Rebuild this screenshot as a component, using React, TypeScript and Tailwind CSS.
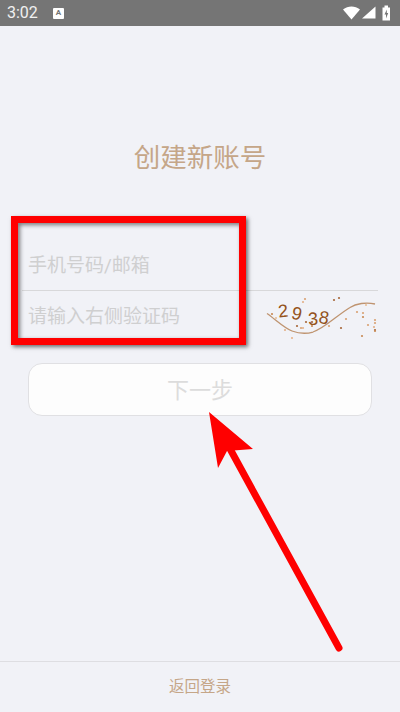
const cjk = "font-['Roboto','Noto_Sans_CJK_SC',sans-serif]"

const captchaDots: [number, number, string][] = [
  [272, 314, "#c98a55"], [276, 318, "#e8c09a"], [282, 316, "#e8c09a"], [285, 316, "#d9a274"], [285, 330, "#e3b088"],
  [292, 338, "#e8b48c"], [297, 326, "#a8673a"], [301, 328, "#d9a274"], [303, 328, "#e3b088"], [303, 302, "#e3b088"],
  [305, 299, "#d9a274"], [306, 322, "#a8673a"], [312, 322, "#a8673a"], [312, 326, "#c98a55"], [329, 326, "#d9a274"],
  [334, 300, "#a8673a"], [339, 298, "#a8673a"], [346, 319, "#d9a274"], [341, 328, "#a8673a"], [357, 312, "#d9a274"],
  [363, 313, "#d9a274"], [363, 317, "#c98a55"], [366, 305, "#e8c09a"], [362, 336, "#c98a55"], [368, 325, "#d9a274"],
  [375, 320, "#d9a274"], [375, 323, "#d9a274"], [374, 327, "#e3b088"], [375, 330, "#a8673a"], [375, 331, "#c98a55"],
]

function StatusBar() {
  return (
    <div className="flex h-[26px] shrink-0 items-center justify-between bg-[#757575] pl-[7px] pr-[7px]">
      <div className="flex items-center">
        <span className="font-['Roboto',sans-serif] text-[16px] leading-none text-white/90">3:02</span>
        <span className="ml-[15px] flex h-[11px] w-[11px] items-center justify-center rounded-[1px] bg-white font-['Roboto',sans-serif] text-[8px] font-bold leading-none text-[#757575]">
          A
        </span>
      </div>
      <svg width="50" height="16" viewBox="0 0 50 16" fill="white">
        <path d="M0 4.500C2.500 2.500 5.500 1.500 8.500 1.500S14.500 2.500 17 4.500L8.500 14.500Z" />
        <path d="M19 13.500L32.500 1.500V13.500Z" />
        <path d="M41.500 2.500V0.500H45V2.500H47V15.500H39.500V2.500Z" />
        <path d="M43.800 4.500L41.500 9.500H43V13.500L45.200 8H43.800Z" fill="#757575" />
      </svg>
    </div>
  )
}

function Captcha() {
  return (
    <svg width="120" height="50" viewBox="262 291 120 50" className="absolute right-[-4px] top-0">
      <path
        d="M267 313.500C275 319 284 328 292 331C299 333.500 306 334 313 332C325 328 336 316 350 307.500C356 303.500 366 302 375 304"
        fill="none"
        stroke="#bf9470"
        strokeWidth="1.300"
      />
      {captchaDots.map(([x, y, color], i) => (
        <circle key={i} cx={x} cy={y} r="1.100" fill={color} />
      ))}
      <g fill="#94521c" fontFamily="'Liberation Sans', sans-serif" fontSize="18">
        <text x="278" y="317" transform="rotate(-6 283 310)">2</text>
        <text x="292" y="320" transform="rotate(14 298 313)">9</text>
        <text x="308" y="325" transform="rotate(-4 313 318)">3</text>
        <text x="319" y="324" transform="rotate(10 325 317)">8</text>
      </g>
    </svg>
  )
}

export default function App() {
  return (
    <div className={`relative flex h-[712px] w-[400px] flex-col overflow-hidden bg-[#f1f2f7] ${cjk}`}>
      <StatusBar />

      <main className="flex-1">
        <h1 className="mt-[114px] text-center text-[26.500px] font-normal leading-9 text-[#c5a688]">创建新账号</h1>

        <div className="mx-[22px] mt-[64px]">
          <div className="flex h-[51px] items-center border-b border-[#d8d8da] pl-[6px] pt-[2px] text-[19px] text-[#cfcfd0]">
            手机号码/邮箱
          </div>
          <div className="relative flex h-[50px] items-center pl-[6px] pt-[2px] text-[19px] text-[#cfcfd0]">
            请输入右侧验证码
            <Captcha />
          </div>
        </div>

        <button
          type="button"
          className="mx-[28px] mt-[22px] flex h-[53px] w-[344px] items-center justify-center rounded-[14px] border border-[#e0e0e3] bg-[#fdfdfd] pt-[1px] text-[22px] text-[#dcdcdc]"
        >
          下一步
        </button>
      </main>

      <footer className="flex h-[51px] shrink-0 items-center justify-center border-t border-[#dedee2] pt-[1px] text-[15.500px] text-[#c5a688]">
        返回登录
      </footer>

      {/* annotation drawn over the screenshot */}
      <div className="absolute left-[11px] top-[216px] h-[129px] w-[235px] border-[7px] border-[#ff0000] shadow-[2px_2px_4px_rgba(0,0,0,0.55),inset_2px_2px_4px_rgba(0,0,0,0.5)]" />
      <svg width="400" height="712" viewBox="0 0 400 712" className="pointer-events-none absolute left-0 top-0">
        <path d="M339 648L229 447" stroke="#ff0000" strokeWidth="7" strokeLinecap="round" fill="none" />
        <path d="M209 412L253 449L227 451L218 468Z" fill="#ff0000" />
      </svg>
    </div>
  )
}
